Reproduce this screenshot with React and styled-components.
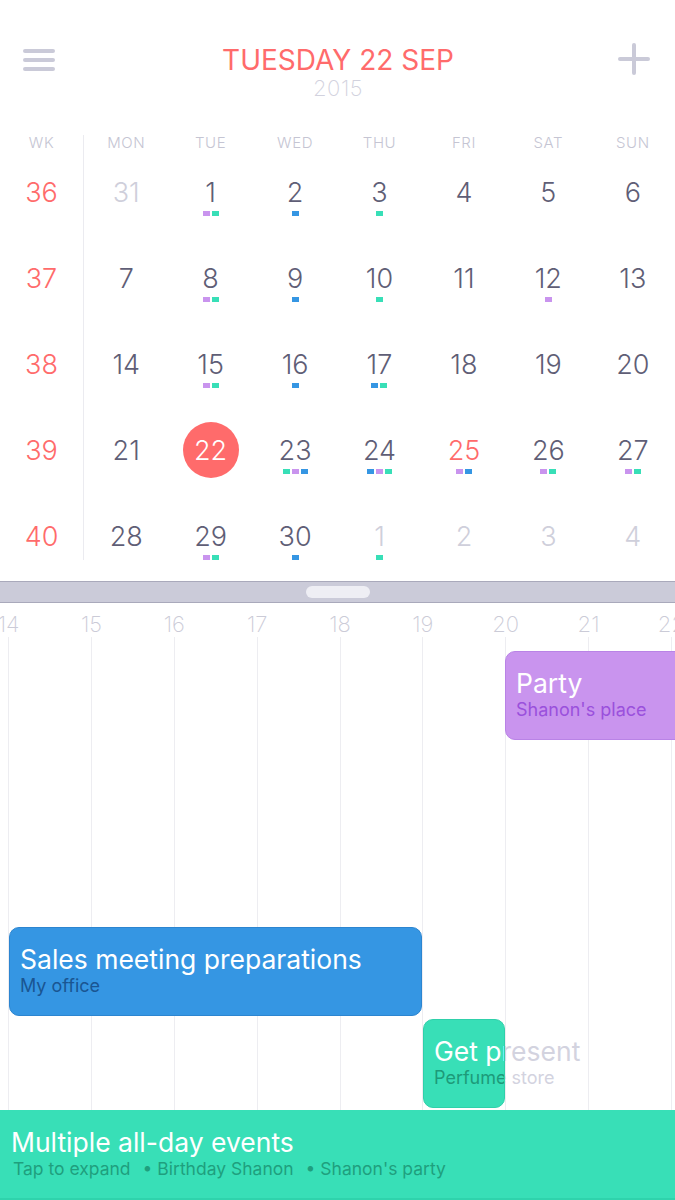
import styled, { createGlobalStyle } from 'styled-components'

const RED = '#ff6b6b'
const PURPLE = '#c994ee'
const GREEN = '#38dfb7'
const BLUE = '#3596e3'
const DOT = { p: PURPLE, g: GREEN, b: BLUE }

const HOUR_START = 14
const HOUR_WIDTH = 82.85
const HOUR_OFFSET = 8.6

const weeks = [
    { wk: 36, days: [['31', 'faded'], ['1', '', 'pg'], ['2', '', 'b'], ['3', '', 'g'], ['4'], ['5'], ['6']] },
    { wk: 37, days: [['7'], ['8', '', 'pg'], ['9', '', 'b'], ['10', '', 'g'], ['11'], ['12', '', 'p'], ['13']] },
    { wk: 38, days: [['14'], ['15', '', 'pg'], ['16', '', 'b'], ['17', '', 'bg'], ['18'], ['19'], ['20']] },
    { wk: 39, days: [['21'], ['22', 'today'], ['23', '', 'gpb'], ['24', '', 'bpg'], ['25', 'red', 'pb'], ['26', '', 'pg'], ['27', '', 'pg']] },
    { wk: 40, days: [['28'], ['29', '', 'pg'], ['30', '', 'b'], ['1', 'faded', 'g'], ['2', 'faded'], ['3', 'faded'], ['4', 'faded']] },
]

const weekdays = ['MON', 'TUE', 'WED', 'THU', 'FRI', 'SAT', 'SUN']

const events = [
    { title: 'Party', place: "Shanon's place", left: 505, top: 48, width: 260, bg: PURPLE, border: '#b983e6', sub: '#9a50dc' },
    { title: 'Sales meeting preparations', place: 'My office', left: 9, top: 324, width: 413, bg: BLUE, border: '#2c85d0', sub: '#1a5592' },
    { title: 'Get present', place: 'Perfume store', left: 423, top: 416, width: 82, bg: GREEN, border: '#2fd0aa', sub: '#1d9a79', spill: true },
]

const GlobalStyle = createGlobalStyle`
    body {
        margin: 0;
        background: #ffffff;
        font-family: Inter, Roboto, "Liberation Sans", sans-serif;
    }
`

function App() {
    const hours = []
    for (let i = 0; i < 9; i++) hours.push(HOUR_START + i)

    return (
        <Page>
            <GlobalStyle />
            <Header>
                <IconButton>
                    <svg width="34" height="26" viewBox="0 0 34 26">
                        <g stroke="#cacad8" strokeWidth="4" strokeLinecap="round">
                            <line x1="3" y1="4" x2="31" y2="4" />
                            <line x1="3" y1="13" x2="31" y2="13" />
                            <line x1="3" y1="22" x2="31" y2="22" />
                        </g>
                    </svg>
                </IconButton>
                <TitleBlock>
                    <Title>TUESDAY 22 SEP</Title>
                    <Year>2015</Year>
                </TitleBlock>
                <IconButton>
                    <svg width="32" height="32" viewBox="0 0 32 32">
                        <g stroke="#cacad8" strokeWidth="4" strokeLinecap="round">
                            <line x1="16" y1="2" x2="16" y2="30" />
                            <line x1="2" y1="16" x2="30" y2="16" />
                        </g>
                    </svg>
                </IconButton>
            </Header>

            <Calendar>
                <WeekCol>
                    <DayLabel>WK</DayLabel>
                    {weeks.map((w, i) => (
                        <WeekCell key={w.wk} last={i === weeks.length - 1}>{w.wk}</WeekCell>
                    ))}
                </WeekCol>
                <DaysGrid>
                    {weekdays.map(d => <DayLabel key={d}>{d}</DayLabel>)}
                    {weeks.map(w => w.days.map(([n, kind, dots], j) => (
                        <DayCell key={w.wk + '-' + j}>
                            <DayNumber kind={kind}>{n}</DayNumber>
                            <Dots>
                                {(dots || '').split('').map((c, k) => <Dot key={k} color={DOT[c]} />)}
                            </Dots>
                        </DayCell>
                    )))}
                </DaysGrid>
            </Calendar>

            <Splitter>
                <Handle />
            </Splitter>

            <Timeline>
                {hours.map((h, i) => (
                    <HourMark key={h} style={{ left: HOUR_OFFSET + i * HOUR_WIDTH }}>
                        <HourLabel>{h}</HourLabel>
                        <HourLine />
                    </HourMark>
                ))}

                {events.map(e => (
                    <EventSlot key={e.title} style={{ left: e.left, top: e.top }}>
                        {e.spill && (
                            <Spill>
                                <EventTitle>{e.title}</EventTitle>
                                <EventPlace color="#d3d3df">{e.place}</EventPlace>
                            </Spill>
                        )}
                        <EventCard bg={e.bg} border={e.border} style={{ width: e.width }}>
                            <EventTitle>{e.title}</EventTitle>
                            <EventPlace color={e.sub}>{e.place}</EventPlace>
                        </EventCard>
                    </EventSlot>
                ))}
            </Timeline>

            <AllDayBar>
                <AllDayTitle>Multiple all-day events</AllDayTitle>
                <AllDayList>
                    <span>Tap to expand</span>
                    <span>• Birthday Shanon</span>
                    <span>• Shanon's party</span>
                </AllDayList>
            </AllDayBar>
        </Page>
    )
}

export default App

const Page = styled.div`
    width: 675px;
    height: 1200px;
    overflow: hidden;
    display: flex;
    flex-direction: column;
    background: #ffffff;
`

const Header = styled.div`
    display: flex;
    justify-content: space-between;
    align-items: flex-start;
    padding: 43px 25px 0 22px;
    height: 92px;
`

const IconButton = styled.div`
    display: flex;
    padding-top: 4px;
    &:last-child {
        padding-top: 0;
    }
`

const TitleBlock = styled.div`
    display: flex;
    flex-direction: column;
    align-items: center;
    margin-left: 2px;
    margin-top: 1px;
`

const Title = styled.div`
    color: ${RED};
    font-size: 28px;
    line-height: 32px;
    font-weight: 400;
`

const Year = styled.div`
    color: #d2d2de;
    font-size: 22px;
    line-height: 24px;
    font-weight: 200;
    letter-spacing: 0.5px;
`

const Calendar = styled.div`
    display: flex;
    height: 446px;
`

const WeekCol = styled.div`
    width: 83px;
    display: flex;
    flex-direction: column;
    border-right: 1px solid #ebebf0;
    align-self: flex-start;
`

const DaysGrid = styled.div`
    flex: 1;
    display: grid;
    grid-template-columns: repeat(7, 1fr);
    grid-auto-rows: 86px;
    grid-template-rows: 15px;
`

const DayLabel = styled.div`
    height: 15px;
    text-align: center;
    font-size: 15px;
    line-height: 15px;
    font-weight: 300;
    letter-spacing: 0.6px;
    color: #c5c5d3;
`

const WeekCell = styled.div`
    height: ${p => (p.last ? 66 : 86)}px;
    padding-top: 28px;
    box-sizing: border-box;
    text-align: center;
    font-size: 27px;
    line-height: 30px;
    font-weight: 300;
    color: ${RED};
`

const DayCell = styled.div`
    display: flex;
    flex-direction: column;
    align-items: center;
    padding-top: 27px;
`

const DayNumber = styled.div`
    width: 56px;
    height: 30px;
    display: flex;
    align-items: center;
    justify-content: center;
    font-size: 27px;
    font-weight: 300;
    color: ${p => (p.kind === 'faded' ? '#cfcfdb' : p.kind === 'red' ? RED : p.kind === 'today' ? '#ffffff' : '#5f5e76')};
    border-radius: 50%;
    ${p => p.kind === 'today' && `
        height: 56px;
        margin-top: -13px;
        background: ${RED};
    `}
`

const Dots = styled.div`
    display: flex;
    gap: 2px;
    margin-top: 4px;
`

const Dot = styled.div`
    width: 7px;
    height: 5px;
    background: ${p => p.color};
`

const Splitter = styled.div`
    height: 20px;
    background: #cbcbd9;
    border-top: 1px solid #a9a9bb;
    border-bottom: 1px solid #a9a9bb;
    display: flex;
    align-items: center;
    justify-content: center;
`

const Handle = styled.div`
    width: 64px;
    height: 12px;
    border-radius: 6px;
    background: #eeeef4;
`

const Timeline = styled.div`
    position: relative;
    flex: 1;
    overflow: hidden;
`

const HourMark = styled.div`
    position: absolute;
    top: 0;
    bottom: 0;
    width: 0;
    display: flex;
    flex-direction: column;
    align-items: center;
`

const HourLabel = styled.div`
    padding-top: 9px;
    height: 25px;
    font-size: 22px;
    line-height: 24px;
    font-weight: 200;
    color: #cbcbd7;
    white-space: nowrap;
`

const HourLine = styled.div`
    flex: 1;
    width: 1px;
    background: #ededf1;
`

const EventSlot = styled.div`
    position: absolute;
`

const Spill = styled.div`
    position: absolute;
    top: 1px;
    left: 1px;
    padding: 14px 0 0 10px;
    white-space: nowrap;
    color: #d3d3df;
`

const EventCard = styled.div`
    position: relative;
    height: 89px;
    box-sizing: border-box;
    padding: 14px 0 0 10px;
    border-radius: 10px;
    background: ${p => p.bg};
    border: 1px solid ${p => p.border};
    overflow: hidden;
    white-space: nowrap;
    color: #ffffff;
`

const EventTitle = styled.div`
    font-size: 26.5px;
    line-height: 34px;
`

const EventPlace = styled.div`
    font-size: 18px;
    line-height: 20px;
    color: ${p => p.color};
`

const AllDayBar = styled.div`
    height: 90px;
    box-sizing: border-box;
    background: ${GREEN};
    padding: 15px 11px 0;
    border-bottom: 2px solid #2fd3ac;
`

const AllDayTitle = styled.div`
    font-size: 26.5px;
    line-height: 34px;
    color: #ffffff;
`

const AllDayList = styled.div`
    display: flex;
    gap: 12px;
    font-size: 17.5px;
    line-height: 20px;
    color: #1f9f7e;
    padding-left: 2px;
`
